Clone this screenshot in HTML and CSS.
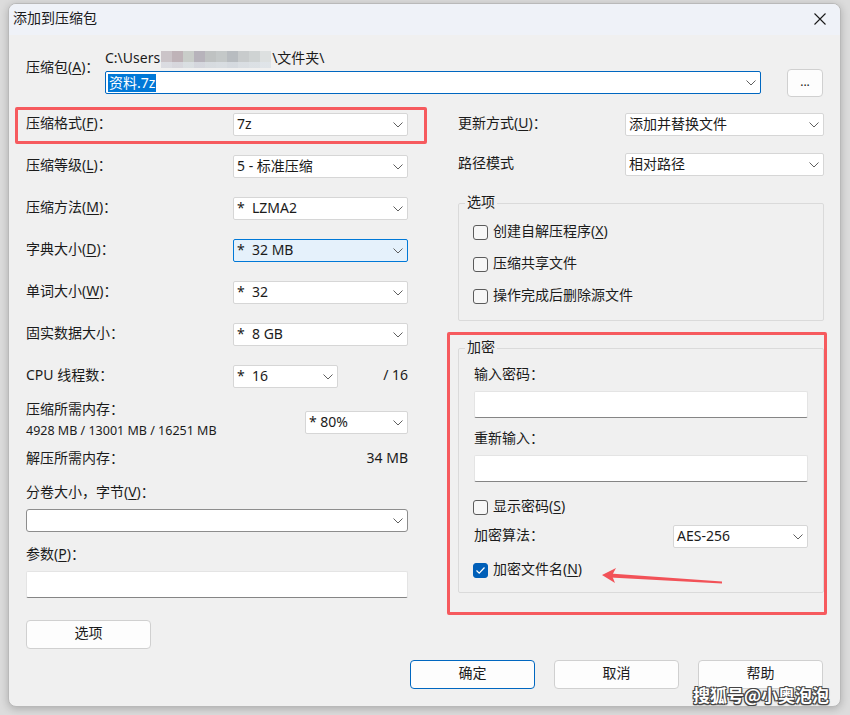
FILE: index.html
```html
<!DOCTYPE html>
<html lang="zh-CN">
<head>
<meta charset="utf-8">
<title>添加到压缩包</title>
<link rel="stylesheet" href="styles.css">
</head>
<body>
<div class="window">
  <div class="titlebar">
    <span class="title">添加到压缩包</span>
    <svg class="close" width="12" height="12" viewBox="0 0 12 12"><path d="M0.5 0.5 L11.5 11.5 M11.5 0.5 L0.5 11.5" stroke="#1a1a1a" stroke-width="1.1" fill="none"/></svg>
  </div>
  <div class="content">
    <div class="archive">
      <div class="archive-label">压缩包(<u>A</u>)：</div>
      <div class="archive-fields">
        <div class="path">C:\Users<span class="mosaic"></span>\文件夹\</div>
        <div class="combo combo-main"><span class="sel">资料.7z</span><svg class="chev" width="10" height="6" viewBox="0 0 10 6"><path d="M0.5 0.5 L5 5 L9.5 0.5" stroke="#5f5f5f" fill="none"/></svg></div>
      </div>
      <div class="btn browse">...</div>
    </div>

    <div class="main">
      <div class="col-left">
        <div class="row"><span>压缩格式(<u>F</u>)：</span><div class="combo w175"><span>7z</span><svg class="chev" width="10" height="6" viewBox="0 0 10 6"><path d="M0.5 0.5 L5 5 L9.5 0.5" stroke="#5f5f5f" fill="none"/></svg></div></div>
        <div class="row"><span>压缩等级(<u>L</u>)：</span><div class="combo w175"><span>5 - 标准压缩</span><svg class="chev" width="10" height="6" viewBox="0 0 10 6"><path d="M0.5 0.5 L5 5 L9.5 0.5" stroke="#5f5f5f" fill="none"/></svg></div></div>
        <div class="row"><span>压缩方法(<u>M</u>)：</span><div class="combo w175"><span>*&nbsp; LZMA2</span><svg class="chev" width="10" height="6" viewBox="0 0 10 6"><path d="M0.5 0.5 L5 5 L9.5 0.5" stroke="#5f5f5f" fill="none"/></svg></div></div>
        <div class="row"><span>字典大小(<u>D</u>)：</span><div class="combo w175 focus"><span>*&nbsp; 32 MB</span><svg class="chev" width="10" height="6" viewBox="0 0 10 6"><path d="M0.5 0.5 L5 5 L9.5 0.5" stroke="#5f5f5f" fill="none"/></svg></div></div>
        <div class="row"><span>单词大小(<u>W</u>)：</span><div class="combo w175"><span>*&nbsp; 32</span><svg class="chev" width="10" height="6" viewBox="0 0 10 6"><path d="M0.5 0.5 L5 5 L9.5 0.5" stroke="#5f5f5f" fill="none"/></svg></div></div>
        <div class="row"><span>固实数据大小：</span><div class="combo w175"><span>*&nbsp; 8 GB</span><svg class="chev" width="10" height="6" viewBox="0 0 10 6"><path d="M0.5 0.5 L5 5 L9.5 0.5" stroke="#5f5f5f" fill="none"/></svg></div></div>
        <div class="row"><span class="lbl207">CPU 线程数：</span><div class="combo w105"><span>*&nbsp; 16</span><svg class="chev" width="10" height="6" viewBox="0 0 10 6"><path d="M0.5 0.5 L5 5 L9.5 0.5" stroke="#5f5f5f" fill="none"/></svg></div><span class="push">/ 16</span></div>
        <div class="mem">
          <div class="mem-text">
            <div class="line20">压缩所需内存：</div>
            <div class="small">4928 MB / 13001 MB / 16251 MB</div>
          </div>
          <div class="combo w103 mem-combo"><span>* 80%</span><svg class="chev" width="10" height="6" viewBox="0 0 10 6"><path d="M0.5 0.5 L5 5 L9.5 0.5" stroke="#5f5f5f" fill="none"/></svg></div>
        </div>
        <div class="line-row"><span>解压所需内存：</span><span>34 MB</span></div>
        <div class="field-label vol">分卷大小，字节(<u>V</u>)：</div>
        <div class="combo full dark"><svg class="chev" width="10" height="6" viewBox="0 0 10 6"><path d="M0.5 0.5 L5 5 L9.5 0.5" stroke="#5f5f5f" fill="none"/></svg></div>
        <div class="field-label params">参数(<u>P</u>)：</div>
        <div class="textbox full"></div>
        <div class="btn options"><span>选项</span></div>
      </div>

      <div class="col-right">
        <div class="row"><span>更新方式(<u>U</u>)：</span><div class="combo w199"><span>添加并替换文件</span><svg class="chev" width="10" height="6" viewBox="0 0 10 6"><path d="M0.5 0.5 L5 5 L9.5 0.5" stroke="#5f5f5f" fill="none"/></svg></div></div>
        <div class="row row2"><span>路径模式</span><div class="combo w199"><span>相对路径</span><svg class="chev" width="10" height="6" viewBox="0 0 10 6"><path d="M0.5 0.5 L5 5 L9.5 0.5" stroke="#5f5f5f" fill="none"/></svg></div></div>

        <div class="group group-opts">
          <span class="group-title">选项</span>
          <div class="check-row"><span class="cb"></span><span class="cb-text">创建自解压程序(<u>X</u>)</span></div>
          <div class="check-row gap"><span class="cb"></span><span class="cb-text">压缩共享文件</span></div>
          <div class="check-row gap"><span class="cb"></span><span class="cb-text">操作完成后删除源文件</span></div>
        </div>

        <div class="group group-enc">
          <span class="group-title">加密</span>
          <div class="line20">输入密码：</div>
          <div class="textbox pw"></div>
          <div class="line20 again">重新输入：</div>
          <div class="textbox pw"></div>
          <div class="check-row show"><span class="cb"></span><span class="cb-text">显示密码(<u>S</u>)</span></div>
          <div class="row algo"><span>加密算法：</span><div class="combo w135"><span>AES-256</span><svg class="chev" width="10" height="6" viewBox="0 0 10 6"><path d="M0.5 0.5 L5 5 L9.5 0.5" stroke="#5f5f5f" fill="none"/></svg></div></div>
          <div class="check-row names"><span class="cb checked"><svg width="11" height="9" viewBox="0 0 11 9"><path d="M1.5 4.5 L4.2 7.2 L9.5 1.5" stroke="#fff" stroke-width="1.2" fill="none"/></svg></span><span class="cb-text">加密文件名(<u>N</u>)</span></div>
        </div>
      </div>
    </div>

    <div class="footer">
      <div class="btn fbtn default"><span>确定</span></div>
      <div class="btn fbtn"><span>取消</span></div>
      <div class="btn fbtn"><span>帮助</span></div>
    </div>
  </div>

  <div class="mark mark1"></div>
  <div class="mark mark2"></div>
  <svg class="arrow" width="140" height="30" viewBox="0 0 140 30">
    <polygon points="20,13.6 20,17.6 132,23.4 132,21.4" fill="#f25258"/>
    <polygon points="12,15 26,8 22,15.6 25,23" fill="#f25258"/>
  </svg>
  <div class="watermark">搜狐号@小奥泡泡</div>
</div>
</body>
</html>
```

FILE: styles.css
```css
html, body {
  margin: 0;
  padding: 0;
}
body {
  width: 850px;
  height: 715px;
  overflow: hidden;
  background: #dcdcdc;
  font-family: "Segoe UI", "Noto Sans", "Noto Sans CJK SC", sans-serif;
  font-size: 14px;
  color: #1b1b1b;
}
u {
  text-decoration-thickness: 1px;
  text-underline-offset: 2px;
}
.window {
  position: relative;
  margin: 3px 0 0 8px;
  width: 833px;
  height: 704px;
  box-sizing: border-box;
  border: 1px solid #b9b9b9;
  border-radius: 8px;
  background: #f0f0f0;
  overflow: hidden;
  box-shadow: 0 2px 8px rgba(0, 0, 0, 0.22);
}
.titlebar {
  height: 31px;
  background: #eff2f8;
  display: flex;
  align-items: center;
  justify-content: space-between;
  padding: 0 14px 0 4px;
}
.title {
  line-height: 20px;
  margin-top: -3px;
}
.close {
  display: block;
  margin-top: -1px;
}
.content {
  padding: 14px 16px 0 17px;
}
.archive {
  display: flex;
  align-items: flex-start;
}
.archive-label {
  width: 79px;
  margin-top: 8px;
  line-height: 20px;
}
.archive-fields {
  width: 656px;
}
.path {
  height: 18px;
  line-height: 18px;
  display: flex;
  align-items: center;
  white-space: nowrap;
}
.mosaic {
  display: inline-block;
  width: 110px;
  height: 17px;
  margin: 2px 1px 0 1px;
  background:
    linear-gradient(to bottom, rgba(255,255,255,0) 0, rgba(255,255,255,0) 11px, rgba(225,230,236,0.7) 11px),
    linear-gradient(to right, #cbc4c8 0 11px, #bfb3b8 11px 22px, #c9cdc9 22px 33px, #b7b3bb 33px 44px, #bfc2c2 44px 55px, #c4c8c8 55px 66px, #b8bcc0 66px 77px, #c8cbcc 77px 88px, #cfd3d3 88px 99px, #dde0e0 99px 110px);
}
.combo {
  position: relative;
  display: flex;
  align-items: center;
  height: 23px;
  box-sizing: border-box;
  background: #fff;
  border: 1px solid #d6d6d6;
  border-radius: 2px;
  padding-left: 3px;
  white-space: nowrap;
  line-height: 18px;
}
.combo > span {
  margin-top: -2px;
}
.chev {
  margin-left: auto;
  margin-right: 4px;
  flex: none;
}
.combo-main {
  margin-top: 4px;
  border: 1px solid #0067c0;
  padding-left: 2px;
}
.combo-main > .sel {
  margin-top: 0;
}
.sel {
  background: #0078d7;
  color: #fff;
  line-height: 18px;
  padding: 0 1px;
}
.btn {
  box-sizing: border-box;
  background: #fdfdfd;
  border: 1px solid #d0d0d0;
  border-radius: 4px;
  display: flex;
  align-items: center;
  justify-content: center;
  line-height: 18px;
}
.btn > span {
  margin-top: -3px;
}
.browse {
  margin-left: 26px;
  margin-top: 20px;
  width: 36px;
  height: 28px;
  font-size: 12px;
  padding-bottom: 2px;
}
.main {
  display: grid;
  grid-template-columns: 382px 366px;
  column-gap: 50px;
  margin-top: 16px;
  align-items: start;
}
.row {
  display: flex;
  align-items: center;
  justify-content: space-between;
  height: 23px;
  white-space: nowrap;
}
.row > span {
  line-height: 18px;
  margin-top: -3px;
}
.col-left .row + .row {
  margin-top: 19px;
}
.w175 { width: 175px; }
.w105 { width: 105px; }
.w103 { width: 103px; }
.w199 { width: 199px; }
.w135 { width: 135px; }
.focus {
  background: #e5f1fb;
  border-color: #0078d7;
}
.lbl207 {
  width: 207px;
}
.push {
  margin-left: auto;
}
.mem {
  margin-top: 12px;
  display: flex;
  justify-content: space-between;
  align-items: flex-start;
}
.line20 {
  line-height: 20px;
  height: 20px;
}
.mem-text .line20 {
  line-height: 18px;
}
.small {
  font-size: 12.5px;
  line-height: 22px;
}
.mem-combo {
  margin-top: 11px;
}
.line-row {
  margin-top: 7px;
  line-height: 18px;
  height: 20px;
  display: flex;
  justify-content: space-between;
}
.field-label {
  line-height: 18px;
  height: 20px;
}
.vol {
  margin-top: 14px;
}
.full {
  width: 100%;
}
.col-left .combo.full {
  margin-top: 6px;
}
.dark {
  border-color: #8d8d8d;
  border-radius: 3px;
}
.params {
  margin-top: 13px;
}
.textbox {
  box-sizing: border-box;
  height: 27px;
  background: #fff;
  border: 1px solid #e4e4e4;
  border-bottom: 1px solid #858585;
  border-radius: 2px;
}
.col-left .textbox {
  margin-top: 6px;
}
.options {
  margin-top: 22px;
  width: 125px;
  height: 29px;
}
.row2 {
  margin-top: 17px;
}
.group {
  position: relative;
  border: 1px solid #dadada;
  border-radius: 2px;
}
.group-title {
  position: absolute;
  top: -11px;
  left: 6px;
  padding: 0 2px;
  background: #f0f0f0;
  line-height: 18px;
}
.group-opts {
  margin-top: 27px;
  padding: 18px 14px 14px 14px;
}
.check-row {
  display: flex;
  align-items: center;
  gap: 5px;
  height: 20px;
  white-space: nowrap;
}
.cb-text {
  line-height: 18px;
  margin-top: -2px;
}
.check-row.gap {
  margin-top: 12px;
}
.cb {
  width: 15px;
  height: 15px;
  box-sizing: border-box;
  border: 1px solid #5b5b5b;
  border-radius: 3px;
  background: #f7f7f7;
  flex: none;
  display: flex;
  align-items: center;
  justify-content: center;
}
.cb.checked {
  background: #005fb8;
  border-color: #005fb8;
}
.group-enc {
  margin-top: 27px;
  padding: 16px 15px 12px 15px;
}
.group-enc .line20 {
  line-height: 18px;
}
.group-enc .check-row {
  margin-left: -1px;
}
.pw {
  margin-top: 6px;
}
.again {
  margin-top: 11px;
}
.show {
  margin-top: 15px;
}
.algo {
  margin-top: 8px;
}
.names {
  margin-top: 12px;
}
.footer {
  display: flex;
  justify-content: flex-end;
  gap: 19px;
  margin-top: 11px;
  padding-right: 1px;
}
.fbtn {
  width: 125px;
  height: 29px;
}
.default {
  border-color: #0067c0;
}
.mark {
  position: absolute;
  box-sizing: border-box;
  border: 3px solid #f65a5e;
  border-radius: 2px;
}
.mark1 {
  left: 6px;
  top: 103px;
  width: 412px;
  height: 37px;
}
.mark2 {
  left: 438px;
  top: 328px;
  width: 380px;
  height: 283px;
}
.arrow {
  position: absolute;
  left: 581px;
  top: 556px;
}
.watermark {
  position: absolute;
  left: 684px;
  top: 682px;
  font-family: "Noto Sans CJK SC", sans-serif;
  font-weight: 700;
  font-size: 17px;
  line-height: 18px;
  color: #fff;
  white-space: nowrap;
  text-shadow: -1px -1px 0 #444, 1px -1px 0 #444, -1px 1px 0 #444, 1px 1px 0 #444, 0 1px 2px #000;
}
```
